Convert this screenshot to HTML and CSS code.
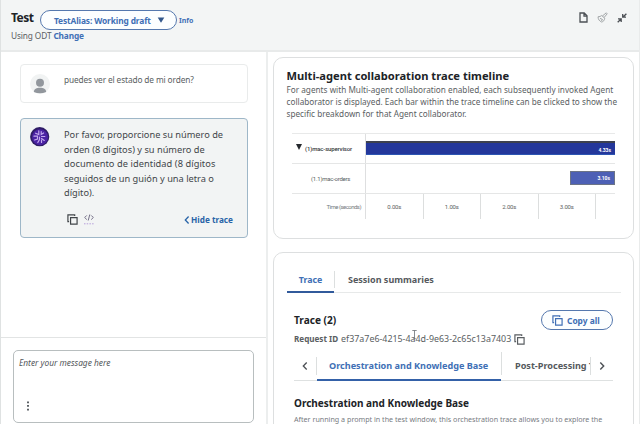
FILE: index.html
```html
<!DOCTYPE html>
<html lang="en">
<head>
<meta charset="utf-8">
<title>Test</title>
<link rel="stylesheet" href="styles.css">
</head>
<body>
<svg class="defs" width="0" height="0">
  <symbol id="copy" viewBox="0 0 12 12"><path d="M3.9 3.9H11V11H3.9ZM2.3 8.4H1V1H8.4V2.2" fill="none" stroke="currentColor" stroke-width="1.3"/></symbol>
</svg>
<div class="app">
  <header class="top">
    <div class="heading">
      <div class="title-row">
        <h1>Test</h1>
        <button class="pill alias"><span>TestAlias: Working draft</span><svg width="8" height="6" viewBox="0 0 8 6"><path d="M.7.4H7.3L4 5.8Z" fill="currentColor"/></svg></button>
        <a class="info">Info</a>
      </div>
      <div class="using"><span class="odt">Using ODT</span> <a>Change</a></div>
    </div>
    <div class="actions">
      <svg width="9" height="11" viewBox="0 0 9 11"><path d="M1 1H5.2L8 3.8V10H1ZM5 1V4.2H8" fill="none" stroke="#4c5055" stroke-width="1.3"/></svg>
      <svg width="11" height="11" viewBox="0 0 11 11"><path d="M1 4.8C2.5 4.8 3.7 4.4 4.7 3.5L7.8 6.2C7.4 8.4 6.3 9.7 4.6 10C2.5 9.2 1.2 7.5 1 4.8ZM5.4 4L9.3.8L10.2 1.8L7.1 5.5M3 6.4L5 7.2M4 8.5L6 7.5" fill="none" stroke="#a2a6a8" stroke-width="1"/></svg>
      <svg width="10" height="10" viewBox="0 0 10 10"><path d="M9.4.7L6.3 3.8M5.7 1V4.2H9M.7 9.3L3.8 6.2M1 5.8H4.2V9" fill="none" stroke="#4c5055" stroke-width="1.3"/></svg>
    </div>
  </header>
  <main>
    <section class="chat">
      <div class="messages">
        <div class="msg user">
          <svg class="avatar" width="20" height="20" viewBox="0 0 20 20"><circle cx="10" cy="10" r="10" fill="#f1f3f3"/><circle cx="10" cy="8.7" r="4" fill="#92979d"/><path d="M3.8 18C4 14.7 6.6 13.7 10 13.7S16 14.7 16.2 18Q10 20.6 3.8 18Z" fill="#92979d"/></svg>
          <p class="ask">puedes ver el estado de mi orden?</p>
        </div>
        <div class="msg bot">
          <svg class="avatar" width="20" height="20" viewBox="0 0 20 20"><circle cx="9.7" cy="9.7" r="9.6" fill="#2f1c66"/><circle cx="10" cy="10.2" r="8" fill="#4b22a3"/><path d="M8.8 3.8V7.6L5.6 6.2M4 9.2H7.5V12L4.6 13M7.8 15.5L9.5 12.5V10M11.2 4.5V7.5L13.6 6M11.5 9.5H14.8M11.5 11.5L14.3 13.4M11.5 13V15.4" fill="none" stroke="#c3a8ee" stroke-width="1.2" stroke-linecap="round"/></svg>
          <div class="answer">
            <p><span>Por favor, proporcione su número de</span><br><span>orden (8 dígitos) y su número de</span><br><span class="a3">documento de identidad (8 dígitos</span><br><span>seguidos de un guión y una letra o</span><br><span>dígito).</span></p>
            <div class="tools">
              <svg class="cp" width="11" height="11"><use href="#copy"/></svg>
              <svg width="10" height="12" viewBox="0 0 10 12"><path d="M2.8 1.4L.7 3.5L2.8 5.6M7.2 1.4L9.3 3.5L7.2 5.6M5.8.5L4.2 6.5" fill="none" stroke="#66617c" stroke-width=".9"/><path d="M0 9.8H10" stroke="#b79fda" stroke-width="1" stroke-dasharray="1.5 1.2"/></svg>
              <a class="hide"><svg width="6" height="8" viewBox="0 0 6 8"><path d="M4.6.5L1.3 4L4.6 7.5" fill="none" stroke="currentColor" stroke-width="1.3"/></svg><span>Hide trace</span></a>
            </div>
          </div>
        </div>
      </div>
      <div class="composer">
        <div class="field">
          <span class="placeholder">Enter your message here</span>
          <svg width="4" height="10" viewBox="0 0 4 10"><path d="M1 .5H3V2.2H1ZM1 4.1H3V5.8H1ZM1 7.7H3V9.4H1Z" fill="#5c6166"/></svg>
        </div>
      </div>
    </section>
    <section class="details">
      <article class="card timeline">
        <h2>Multi-agent collaboration trace timeline</h2>
        <p>For agents with Multi-agent collaboration enabled, each subsequently invoked Agent<br>collaborator is displayed. Each bar within the trace timeline can be clicked to show the<br>specific breakdown for that Agent collaborator.</p>
        <div class="chart">
          <div class="row"><div class="label main"><svg width="6" height="6" viewBox="0 0 6 6"><path d="M0 0H6L3 6Z" fill="#25292d"/></svg><span>(1)mac-supervisor</span></div><div class="track"><div class="bar one">4.33s</div></div></div>
          <div class="row"><div class="label sub"><span>(1.1)mac-orders</span></div><div class="track"><div class="bar two">3.10s</div></div></div>
          <div class="row axis"><div class="label time"><span>Time (seconds)</span></div><div class="tick">0.00s</div><div class="tick">1.00s</div><div class="tick">2.00s</div><div class="tick">3.00s</div><div class="tick rest"></div></div>
        </div>
      </article>
      <article class="card trace">
        <nav class="tabs"><a class="on">Trace</a><a class="sess">Session summaries</a></nav>
        <div class="body">
          <div class="trace-head"><h3>Trace (2)</h3><button class="pill copy-all"><svg width="11" height="11"><use href="#copy"/></svg><span>Copy all</span></button></div>
          <div class="request"><b>Request ID</b> <span class="id">ef37a7e6-4215-4a4d-9e63-2c65c13a7403</span><svg width="11" height="11"><use href="#copy"/></svg>
            <svg class="cursor" width="5" height="9" viewBox="0 0 5 9"><path d="M.3.5H4.7M2.5.5V8.5M1.4 8.5H3.6" fill="none" stroke="#6b7074" stroke-width=".8"/></svg>
          </div>
          <nav class="steps">
            <span class="arrow left"><svg width="6" height="8" viewBox="0 0 6 8"><path d="M4.7.5L1.3 4L4.7 7.5" fill="none" stroke="#4c5055" stroke-width="1.3"/></svg></span>
            <a class="active"><span>Orchestration and Knowledge Base</span></a>
            <a class="post"><span>Post-Processing Trace</span></a>
            <span class="arrow right"><svg width="6" height="8" viewBox="0 0 6 8"><path d="M1.3.5L4.7 4L1.3 7.5" fill="none" stroke="#4c5055" stroke-width="1.4"/></svg></span>
          </nav>
          <h4>Orchestration and Knowledge Base</h4>
          <p class="after">After running a prompt in the test window, this orchestration trace allows you to explore the</p>
        </div>
      </article>
    </section>
  </main>
</div>
</body>
</html>
```
FILE: styles.css
```css
* { box-sizing: border-box; }
body { margin: 0; overflow: hidden; font-family: "Noto Sans", "Open Sans", sans-serif; color: #5a5e62; background: #fff; }
h1, h2, h3, h4, p { margin: 0; white-space: nowrap; }
h1, h2, h3, h4 { color: #202327; font-weight: 700; }
a, .pill { color: #406fb5; font-weight: 700; white-space: nowrap; }
svg { display: block; flex: none; }
.defs { position: absolute; }
.app { width: 640px; height: 424px; display: flex; flex-direction: column; border-left: 1px solid #dfe2e2; border-right: 1px solid #e9ebeb; overflow: hidden; }
.top { height: 52px; flex: none; background: #f3f5f5; border-bottom: 2px solid #e8eaea; display: flex; justify-content: space-between; padding: 10px 12px 0 10px; }
.title-row { display: flex; height: 20px; }
h1 { font-size: 12px; line-height: 15px; width: 29px; letter-spacing: -.5px; }
.pill { font-family: inherit; background: #fcfeff; border: 1.5px solid #5578ae; border-radius: 11px; display: flex; align-items: center; padding: 0; }
.alias { width: 137px; height: 20px; font-size: 8.4px; letter-spacing: -.13px; gap: 6px; padding-left: 13px; }
.alias svg { color: #34588c; }
.info { font-size: 7px; line-height: 10px; margin: 6px 0 0 2px; }
.using { font-size: 8.3px; letter-spacing: -.12px; line-height: 11px; white-space: nowrap; display: flex; gap: 2px; }
.actions { display: flex; gap: 9px; padding-top: 2px; }
.actions svg:nth-child(3) { margin: 1px 0 0 0; }
main { flex: 1; display: flex; min-height: 0; }
.chat { width: 267px; flex: none; border-right: 2px solid #eceeee; display: flex; flex-direction: column; }
.messages { height: 286px; flex: none; border-bottom: 1px solid #e2e4e4; padding: 12px 18px 0 19px; display: flex; flex-direction: column; gap: 15px; }
.msg { display: flex; border-radius: 4px; border: 1px solid #e9ebeb; padding-left: 9px; }
.avatar { margin-top: 9px; }
.user { height: 39px; }
.ask { font-size: 8.3px; letter-spacing: -.12px; line-height: 12px; margin: 9px 0 0 14px; }
.bot { height: 120px; background: #f2f4f4; border-color: #9eb7c8; color: #414549; }
.bot .avatar { margin-top: 8px; }
.answer { margin: 9px 0 0 14px; font-size: 9.24px; line-height: 14.5px; flex: 1; }
.a3 { letter-spacing: .07px; }
.tools { display: flex; align-items: center; margin: 11px 14px 0 3px; height: 16px; gap: 6px; }
.hide { margin-left: auto; display: flex; align-items: center; gap: 1px; font-size: 8.2px; line-height: 12px; color: #2864a8; }
.composer { padding: 12px 12px 0 12px; }
.field { height: 73px; border: 1.5px solid #b8bebf; border-radius: 5px; padding: 6px 0 0 5px; }
.placeholder { display: block; font-size: 8.35px; line-height: 12px; font-style: italic; white-space: nowrap; color: #53575b; }
.field svg { margin: 32px 0 0 7px; }
.details { flex: 1; min-width: 0; padding: 5px 5px 0 5px; display: flex; flex-direction: column; gap: 13px; }
.card { border: 1.5px solid #dddfe0; border-radius: 10px; flex: none; }
.timeline { height: 182px; padding: 10px 0 0 12.5px; }
h2 { font-size: 11.15px; line-height: 15px; }
.timeline p { font-size: 8.2px; line-height: 12.2px; letter-spacing: .01px; margin-top: 1px; }
.chart { margin: 12px 18px 0 5.5px; border-top: 1px solid #e8e9e9; font-family: Roboto, "Liberation Sans", sans-serif; }
.row { display: flex; height: 30px; border-bottom: 1px solid #e5e6e6; }
.label { width: 74px; flex: none; border-right: 1px solid #dedfe0; display: flex; align-items: center; font-size: 6px; white-space: nowrap; }
.main { color: #34383c; font-weight: 500; padding-left: 4px; gap: 3px; letter-spacing: -.15px; }
.main svg { margin-top: -3px; }
.sub { padding-left: 19px; letter-spacing: -.25px; }
.track { flex: 1; display: flex; align-items: center; justify-content: flex-end; }
.bar { height: 14px; color: #fff; font-size: 5px; font-weight: 700; line-height: 14px; text-align: right; padding-right: 4px; border-top: 2px solid #3d414f; }
.one { background: #24379b; width: 100%; border-bottom: 1px solid #2d55b2; }
.two { background: #4d60b5; width: 45px; border: 1px solid #6c7486; line-height: 13px; }
.axis { height: 25px; border: 0; }
.time { justify-content: flex-end; padding-right: 4px; color: #777b7f; letter-spacing: -.52px; }
.tick { width: 57.5px; border-right: 1px solid #dcdede; text-align: center; font-size: 6px; letter-spacing: -.2px; line-height: 26px; }
.rest { border: 0; width: 19px; }
.trace { height: 200px; padding: 15px 12px 0 13px; }
.tabs { display: flex; height: 25px; border-bottom: 1.5px solid #e7e9e9; font-size: 9px; line-height: 24px; }
.tabs .on { width: 47px; height: 25px; text-align: center; border-bottom: 2px solid #315a9b; font-size: 8.8px; }
.sess { color: #55595d; border-left: 1px solid #dcdfdf; padding-left: 13px; height: 17px; margin-top: 3px; line-height: 18px; }
.body { padding: 17px 8px 0 7px; }
.trace-head { height: 20px; display: flex; justify-content: space-between; }
h3 { font-size: 10.1px; line-height: 21px; }
.copy-all { height: 20px; width: 72px; font-size: 8.4px; padding-left: 10px; gap: 4px; }
.request { position: relative; display: flex; align-items: center; gap: 3px; height: 12px; margin-top: 3px; font-size: 8.1px; line-height: 12px; white-space: nowrap; }
.id { font-size: 8.9px; }
.cursor { position: absolute; left: 118px; top: -3px; }
.steps { display: flex; height: 29px; margin-top: 7px; border-bottom: 1px solid #dee1e1; font-size: 9.1px; line-height: 27px; }
.arrow { display: flex; align-items: center; justify-content: center; width: 23px; height: 18px; margin-top: 5px; flex: none; }
.left { border-right: 1px solid #dcdfdf; }
.right { border-left: 1px solid #dcdfdf; }
.active { width: 184px; flex: none; padding-left: 12px; height: 29px; border-bottom: 2.5px solid #3461a8; }
.post { color: #55595d; flex: 1; overflow: hidden; border-left: 1px solid #dcdfdf; padding-left: 13px; height: 23px; }
h4 { font-size: 10px; line-height: 14px; margin-top: 15px; }
.after { font-size: 7.15px; line-height: 12px; margin-top: 3px; color: #777b7f; }
```
